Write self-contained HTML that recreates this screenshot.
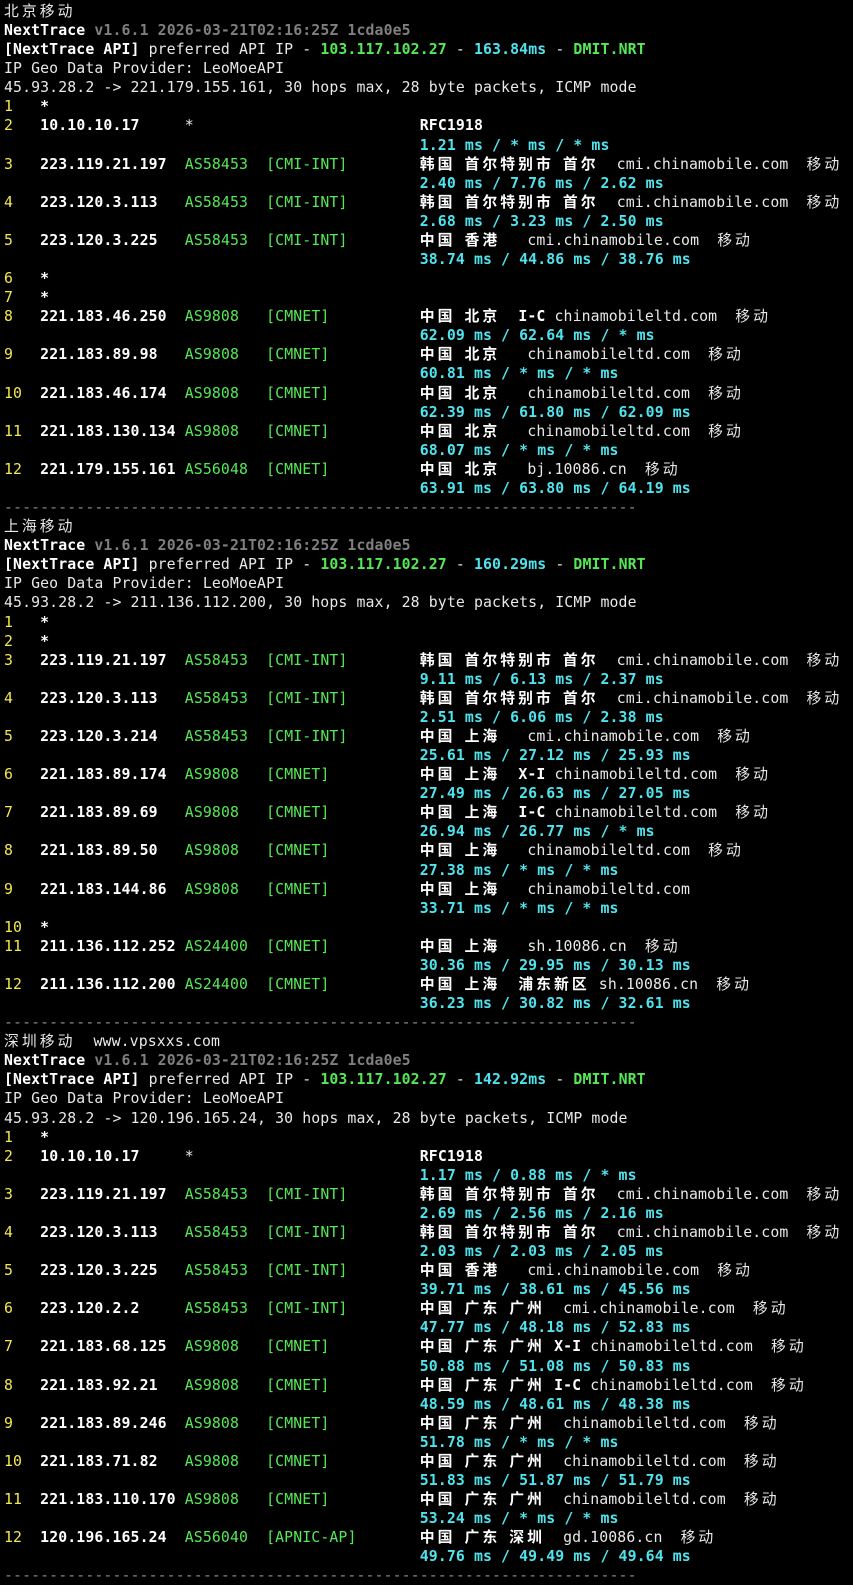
<!DOCTYPE html>
<html><head><meta charset="utf-8">
<style>
html,body{margin:0;padding:0;background:#000;}
body{width:853px;height:1575px;overflow:hidden;}
pre{margin:0;padding:2px 0 0 4px;font-family:"DejaVu Sans Mono","Liberation Mono",monospace;font-size:14.83px;letter-spacing:0.11px;line-height:19.08px;color:#e8e8e8;white-space:pre;}
.k{font-family:"Noto Sans CJK SC","WenQuanYi Zen Hei",sans-serif;letter-spacing:3.03px;line-height:0;}
.y{color:#f2e94e;}
.w{color:#fff;font-weight:bold;}
.g{color:#55e855;}
.c{color:#4fe3ee;font-weight:bold;}
.gr{color:#7f7f7f;font-weight:bold;}
.d{color:#8a8a8a;}
.b{font-weight:bold;color:#fff;}
</style></head><body><pre><span class="k">北京移动</span>
<span class="w">NextTrace</span> <span class="gr">v1.6.1 2026-03-21T02:16:25Z 1cda0e5</span>
<span class="w">[NextTrace API]</span> preferred API IP - <span class="g b" style="color:#55e855">103.117.102.27</span> - <span class="c">163.84ms</span> - <span class="g b" style="color:#55e855">DMIT.NRT</span>
IP Geo Data Provider: LeoMoeAPI
45.93.28.2 -&gt; 221.179.155.161, 30 hops max, 28 byte packets, ICMP mode
<span class="y">1</span>   <span class="w">*</span>
<span class="y">2</span>   <span class="w">10.10.10.17</span>     *                         <span class="w">RFC1918</span>
                                              <span class="c">1.21 ms / * ms / * ms</span>
<span class="y">3</span>   <span class="w">223.119.21.197</span>  <span class="g">AS58453</span>  <span class="g">[CMI-INT]</span>        <span class="w k">韩国</span> <span class="w k">首尔特别市</span> <span class="w k">首尔</span>  cmi.chinamobile.com  <span class="k">移动</span>
                                              <span class="c">2.40 ms / 7.76 ms / 2.62 ms</span>
<span class="y">4</span>   <span class="w">223.120.3.113</span>   <span class="g">AS58453</span>  <span class="g">[CMI-INT]</span>        <span class="w k">韩国</span> <span class="w k">首尔特别市</span> <span class="w k">首尔</span>  cmi.chinamobile.com  <span class="k">移动</span>
                                              <span class="c">2.68 ms / 3.23 ms / 2.50 ms</span>
<span class="y">5</span>   <span class="w">223.120.3.225</span>   <span class="g">AS58453</span>  <span class="g">[CMI-INT]</span>        <span class="w k">中国</span> <span class="w k">香港</span>   cmi.chinamobile.com  <span class="k">移动</span>
                                              <span class="c">38.74 ms / 44.86 ms / 38.76 ms</span>
<span class="y">6</span>   <span class="w">*</span>
<span class="y">7</span>   <span class="w">*</span>
<span class="y">8</span>   <span class="w">221.183.46.250</span>  <span class="g">AS9808</span>   <span class="g">[CMNET]</span>          <span class="w k">中国</span> <span class="w k">北京</span>  <span class="w">I-C</span> chinamobileltd.com  <span class="k">移动</span>
                                              <span class="c">62.09 ms / 62.64 ms / * ms</span>
<span class="y">9</span>   <span class="w">221.183.89.98</span>   <span class="g">AS9808</span>   <span class="g">[CMNET]</span>          <span class="w k">中国</span> <span class="w k">北京</span>   chinamobileltd.com  <span class="k">移动</span>
                                              <span class="c">60.81 ms / * ms / * ms</span>
<span class="y">10</span>  <span class="w">221.183.46.174</span>  <span class="g">AS9808</span>   <span class="g">[CMNET]</span>          <span class="w k">中国</span> <span class="w k">北京</span>   chinamobileltd.com  <span class="k">移动</span>
                                              <span class="c">62.39 ms / 61.80 ms / 62.09 ms</span>
<span class="y">11</span>  <span class="w">221.183.130.134</span> <span class="g">AS9808</span>   <span class="g">[CMNET]</span>          <span class="w k">中国</span> <span class="w k">北京</span>   chinamobileltd.com  <span class="k">移动</span>
                                              <span class="c">68.07 ms / * ms / * ms</span>
<span class="y">12</span>  <span class="w">221.179.155.161</span> <span class="g">AS56048</span>  <span class="g">[CMNET]</span>          <span class="w k">中国</span> <span class="w k">北京</span>   bj.10086.cn  <span class="k">移动</span>
                                              <span class="c">63.91 ms / 63.80 ms / 64.19 ms</span>
<span class="d">----------------------------------------------------------------------</span>
<span class="k">上海移动</span>
<span class="w">NextTrace</span> <span class="gr">v1.6.1 2026-03-21T02:16:25Z 1cda0e5</span>
<span class="w">[NextTrace API]</span> preferred API IP - <span class="g b" style="color:#55e855">103.117.102.27</span> - <span class="c">160.29ms</span> - <span class="g b" style="color:#55e855">DMIT.NRT</span>
IP Geo Data Provider: LeoMoeAPI
45.93.28.2 -&gt; 211.136.112.200, 30 hops max, 28 byte packets, ICMP mode
<span class="y">1</span>   <span class="w">*</span>
<span class="y">2</span>   <span class="w">*</span>
<span class="y">3</span>   <span class="w">223.119.21.197</span>  <span class="g">AS58453</span>  <span class="g">[CMI-INT]</span>        <span class="w k">韩国</span> <span class="w k">首尔特别市</span> <span class="w k">首尔</span>  cmi.chinamobile.com  <span class="k">移动</span>
                                              <span class="c">9.11 ms / 6.13 ms / 2.37 ms</span>
<span class="y">4</span>   <span class="w">223.120.3.113</span>   <span class="g">AS58453</span>  <span class="g">[CMI-INT]</span>        <span class="w k">韩国</span> <span class="w k">首尔特别市</span> <span class="w k">首尔</span>  cmi.chinamobile.com  <span class="k">移动</span>
                                              <span class="c">2.51 ms / 6.06 ms / 2.38 ms</span>
<span class="y">5</span>   <span class="w">223.120.3.214</span>   <span class="g">AS58453</span>  <span class="g">[CMI-INT]</span>        <span class="w k">中国</span> <span class="w k">上海</span>   cmi.chinamobile.com  <span class="k">移动</span>
                                              <span class="c">25.61 ms / 27.12 ms / 25.93 ms</span>
<span class="y">6</span>   <span class="w">221.183.89.174</span>  <span class="g">AS9808</span>   <span class="g">[CMNET]</span>          <span class="w k">中国</span> <span class="w k">上海</span>  <span class="w">X-I</span> chinamobileltd.com  <span class="k">移动</span>
                                              <span class="c">27.49 ms / 26.63 ms / 27.05 ms</span>
<span class="y">7</span>   <span class="w">221.183.89.69</span>   <span class="g">AS9808</span>   <span class="g">[CMNET]</span>          <span class="w k">中国</span> <span class="w k">上海</span>  <span class="w">I-C</span> chinamobileltd.com  <span class="k">移动</span>
                                              <span class="c">26.94 ms / 26.77 ms / * ms</span>
<span class="y">8</span>   <span class="w">221.183.89.50</span>   <span class="g">AS9808</span>   <span class="g">[CMNET]</span>          <span class="w k">中国</span> <span class="w k">上海</span>   chinamobileltd.com  <span class="k">移动</span>
                                              <span class="c">27.38 ms / * ms / * ms</span>
<span class="y">9</span>   <span class="w">221.183.144.86</span>  <span class="g">AS9808</span>   <span class="g">[CMNET]</span>          <span class="w k">中国</span> <span class="w k">上海</span>   chinamobileltd.com
                                              <span class="c">33.71 ms / * ms / * ms</span>
<span class="y">10</span>  <span class="w">*</span>
<span class="y">11</span>  <span class="w">211.136.112.252</span> <span class="g">AS24400</span>  <span class="g">[CMNET]</span>          <span class="w k">中国</span> <span class="w k">上海</span>   sh.10086.cn  <span class="k">移动</span>
                                              <span class="c">30.36 ms / 29.95 ms / 30.13 ms</span>
<span class="y">12</span>  <span class="w">211.136.112.200</span> <span class="g">AS24400</span>  <span class="g">[CMNET]</span>          <span class="w k">中国</span> <span class="w k">上海</span>  <span class="w k">浦东新区</span> sh.10086.cn  <span class="k">移动</span>
                                              <span class="c">36.23 ms / 30.82 ms / 32.61 ms</span>
<span class="d">----------------------------------------------------------------------</span>
<span class="k">深圳移动</span>  www.vpsxxs.com
<span class="w">NextTrace</span> <span class="gr">v1.6.1 2026-03-21T02:16:25Z 1cda0e5</span>
<span class="w">[NextTrace API]</span> preferred API IP - <span class="g b" style="color:#55e855">103.117.102.27</span> - <span class="c">142.92ms</span> - <span class="g b" style="color:#55e855">DMIT.NRT</span>
IP Geo Data Provider: LeoMoeAPI
45.93.28.2 -&gt; 120.196.165.24, 30 hops max, 28 byte packets, ICMP mode
<span class="y">1</span>   <span class="w">*</span>
<span class="y">2</span>   <span class="w">10.10.10.17</span>     *                         <span class="w">RFC1918</span>
                                              <span class="c">1.17 ms / 0.88 ms / * ms</span>
<span class="y">3</span>   <span class="w">223.119.21.197</span>  <span class="g">AS58453</span>  <span class="g">[CMI-INT]</span>        <span class="w k">韩国</span> <span class="w k">首尔特别市</span> <span class="w k">首尔</span>  cmi.chinamobile.com  <span class="k">移动</span>
                                              <span class="c">2.69 ms / 2.56 ms / 2.16 ms</span>
<span class="y">4</span>   <span class="w">223.120.3.113</span>   <span class="g">AS58453</span>  <span class="g">[CMI-INT]</span>        <span class="w k">韩国</span> <span class="w k">首尔特别市</span> <span class="w k">首尔</span>  cmi.chinamobile.com  <span class="k">移动</span>
                                              <span class="c">2.03 ms / 2.03 ms / 2.05 ms</span>
<span class="y">5</span>   <span class="w">223.120.3.225</span>   <span class="g">AS58453</span>  <span class="g">[CMI-INT]</span>        <span class="w k">中国</span> <span class="w k">香港</span>   cmi.chinamobile.com  <span class="k">移动</span>
                                              <span class="c">39.71 ms / 38.61 ms / 45.56 ms</span>
<span class="y">6</span>   <span class="w">223.120.2.2</span>     <span class="g">AS58453</span>  <span class="g">[CMI-INT]</span>        <span class="w k">中国</span> <span class="w k">广东</span> <span class="w k">广州</span>  cmi.chinamobile.com  <span class="k">移动</span>
                                              <span class="c">47.77 ms / 48.18 ms / 52.83 ms</span>
<span class="y">7</span>   <span class="w">221.183.68.125</span>  <span class="g">AS9808</span>   <span class="g">[CMNET]</span>          <span class="w k">中国</span> <span class="w k">广东</span> <span class="w k">广州</span> <span class="w">X-I</span> chinamobileltd.com  <span class="k">移动</span>
                                              <span class="c">50.88 ms / 51.08 ms / 50.83 ms</span>
<span class="y">8</span>   <span class="w">221.183.92.21</span>   <span class="g">AS9808</span>   <span class="g">[CMNET]</span>          <span class="w k">中国</span> <span class="w k">广东</span> <span class="w k">广州</span> <span class="w">I-C</span> chinamobileltd.com  <span class="k">移动</span>
                                              <span class="c">48.59 ms / 48.61 ms / 48.38 ms</span>
<span class="y">9</span>   <span class="w">221.183.89.246</span>  <span class="g">AS9808</span>   <span class="g">[CMNET]</span>          <span class="w k">中国</span> <span class="w k">广东</span> <span class="w k">广州</span>  chinamobileltd.com  <span class="k">移动</span>
                                              <span class="c">51.78 ms / * ms / * ms</span>
<span class="y">10</span>  <span class="w">221.183.71.82</span>   <span class="g">AS9808</span>   <span class="g">[CMNET]</span>          <span class="w k">中国</span> <span class="w k">广东</span> <span class="w k">广州</span>  chinamobileltd.com  <span class="k">移动</span>
                                              <span class="c">51.83 ms / 51.87 ms / 51.79 ms</span>
<span class="y">11</span>  <span class="w">221.183.110.170</span> <span class="g">AS9808</span>   <span class="g">[CMNET]</span>          <span class="w k">中国</span> <span class="w k">广东</span> <span class="w k">广州</span>  chinamobileltd.com  <span class="k">移动</span>
                                              <span class="c">53.24 ms / * ms / * ms</span>
<span class="y">12</span>  <span class="w">120.196.165.24</span>  <span class="g">AS56040</span>  <span class="g">[APNIC-AP]</span>       <span class="w k">中国</span> <span class="w k">广东</span> <span class="w k">深圳</span>  gd.10086.cn  <span class="k">移动</span>
                                              <span class="c">49.76 ms / 49.49 ms / 49.64 ms</span>
<span class="d">----------------------------------------------------------------------</span>
</pre></body></html>
